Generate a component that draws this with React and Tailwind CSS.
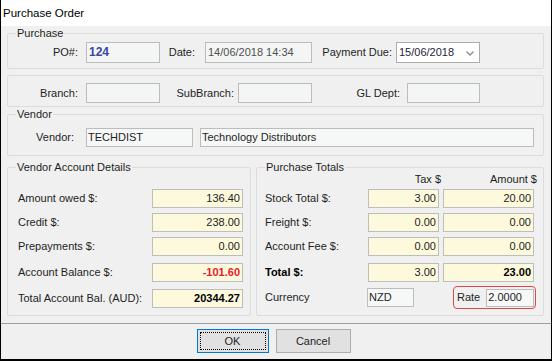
import React from "react";

const Group = ({ title, className = "", children }) => (
  <fieldset className={`border border-[#dcdcdc] rounded-[2px] ${className}`}>
    {title && <legend className="ml-[8px] px-[1px] leading-[13px]">{title}</legend>}
    {children}
  </fieldset>
);

const Field = ({ className = "", children }) => (
  <div className={`flex items-center border leading-[13px] whitespace-nowrap overflow-hidden ${className}`}>
    {children}
  </div>
);

const Money = ({ className = "", children }) => (
  <Field className={`justify-end pr-[2px] h-[19px] bg-[#fdf9dc] border-[#bdbdbd] ${className}`}>
    {children}
  </Field>
);

const accountRows = [
  { label: "Amount owed $:", value: "136.40" },
  { label: "Credit $:", value: "238.00" },
  { label: "Prepayments $:", value: "0.00" },
  { label: "Account Balance $:", value: "-101.60", tone: "font-bold text-[#e8202a]" },
  { label: "Total Account Bal. (AUD):", value: "20344.27", tone: "font-bold text-black" },
];

const totalRows = [
  { label: "Stock Total $:", tax: "3.00", amount: "20.00" },
  { label: "Freight $:", tax: "0.00", amount: "0.00" },
  { label: "Account Fee $:", tax: "0.00", amount: "0.00" },
  { label: "Total $:", tax: "3.00", amount: "23.00", bold: true },
];

const App = () => {
  return (
    <div className="w-[552px] h-[361px] flex flex-col bg-[#f0f0f0] border-x border-b-2 border-black text-[11px] leading-[13px] text-[#1e1e1e] font-['Liberation_Sans',Arial,sans-serif] overflow-hidden">
      <div className="h-[26px] shrink-0 bg-white flex items-center pl-[2px] text-[11.5px] text-black">
        Purchase Order
      </div>

      <div className="flex flex-col pl-[6px] pr-[7px]">
        <Group title="Purchase" className="mt-[1px]">
          <div className="flex items-center pt-[2px] pb-[5px]">
            <span className="w-[70px] text-right">PO#:</span>
            <Field className="ml-[8px] w-[74px] h-[21px] pl-[2px] bg-[#f4f5f5] border-[#bcbcbc] font-bold text-[12px] text-[#3a46a4]">
              124
            </Field>
            <span className="w-[35px] text-right">Date:</span>
            <Field className="ml-[10px] w-[107px] h-[21px] pl-[2px] bg-[#f4f5f5] border-[#bcbcbc] text-[#505050]">
              14/06/2018 14:34
            </Field>
            <span className="w-[80px] text-right">Payment Due:</span>
            <Field className="ml-[4px] w-[84px] h-[21px] pl-[2px] pr-[5px] bg-white border-[#acacac] text-[#1e1e3c] justify-between">
              <span>15/06/2018</span>
              <svg width="8" height="5" viewBox="0 0 8 5" className="mt-[1px]">
                <polyline points="0.5,0.5 4,4 7.5,0.5" fill="none" stroke="#8a8a8a" strokeWidth="1.3" />
              </svg>
            </Field>
          </div>
        </Group>

        <Group className="mt-[6px]">
          <div className="flex items-center pt-[7px] pb-[3px]">
            <span className="w-[70px] text-right">Branch:</span>
            <Field className="ml-[8px] w-[74px] h-[20px] bg-[#f4f5f5] border-[#bcbcbc]" />
            <span className="w-[74px] text-right">SubBranch:</span>
            <Field className="ml-[4px] w-[74px] h-[20px] bg-[#f4f5f5] border-[#bcbcbc]" />
            <span className="w-[88px] text-right">GL Dept:</span>
            <Field className="ml-[7px] w-[73px] h-[20px] bg-[#f4f5f5] border-[#bcbcbc]" />
          </div>
        </Group>

        <Group title="Vendor" className="mt-[1px]">
          <div className="flex items-center pt-[7px] pb-[8px]">
            <span className="w-[66px] text-right">Vendor:</span>
            <Field className="ml-[12px] w-[107px] h-[19px] pl-[1px] bg-[#f6f8f8] border-[#bcbcbc]">
              TECHDIST
            </Field>
            <Field className="ml-[7px] w-[334px] h-[19px] pl-[1px] bg-[#f6f8f8] border-[#bcbcbc]">
              Technology Distributors
            </Field>
          </div>
        </Group>

        <div className="flex gap-[5px] mt-[5px]">
          <Group title="Vendor Account Details" className="w-[244px]">
            <div className="flex flex-col pl-[10px] pr-[7px] pt-[15px] pb-[7px]">
              {accountRows.map((row, i) => (
                <div
                  key={row.label}
                  className={`flex items-center justify-between ${i === 0 ? "" : i < 3 ? "mt-[5px]" : "mt-[7px]"}`}
                >
                  <span>{row.label}</span>
                  <Money className={`w-[91px] ${row.tone || ""}`}>{row.value}</Money>
                </div>
              ))}
            </div>
          </Group>

          <Group title="Purchase Totals" className="flex-1">
            <div className="flex flex-col pl-[8px] pr-[9px] pb-[6px]">
              <div className="flex items-center justify-end h-[13px] -mt-[1px]">
                <span className="w-[71px] text-right pr-[1px]">Tax $</span>
                <span className="ml-[4px] w-[91px] text-right -mr-[3px]">Amount $</span>
              </div>
              {totalRows.map((row, i) => (
                <div
                  key={row.label}
                  className={`flex items-center ${i === 0 ? "mt-[3px]" : i < 3 ? "mt-[5px]" : "mt-[7px]"}`}
                >
                  <span className={`flex-1 ${row.bold ? "font-bold text-black" : ""}`}>{row.label}</span>
                  <Money className="w-[71px]">{row.tax}</Money>
                  <Money className={`ml-[4px] w-[91px] ${row.bold ? "font-bold text-black" : ""}`}>
                    {row.amount}
                  </Money>
                </div>
              ))}
              <div className="flex items-center mt-[4px]">
                <span className="w-[102px]">Currency</span>
                <Field className="w-[47px] h-[19px] pl-[1px] bg-[#f6f8f8] border-[#bcbcbc]">NZD</Field>
                <div className="ml-auto -mr-[2px] w-[83px] h-[23px] flex items-center pl-[3px] border border-[#e04848] rounded-[4px]">
                  <span>Rate</span>
                  <Field className="ml-[6px] w-[48px] h-[18px] pl-[1px] bg-[#f6f8f8] border-[#bcbcbc]">2.0000</Field>
                </div>
              </div>
            </div>
          </Group>
        </div>
      </div>

      <div className="mt-[7px] border-t border-[#a0a0a0]" />

      <div className="flex justify-center gap-[7px] pr-[5px] mt-[5px]">
        <button
          type="button"
          className="w-[72px] h-[24px] p-[2px] bg-[#e1e1e1] border border-[#0078d7] text-[11px] text-[#1e1e1e]"
        >
          <div className="h-full flex items-center justify-center border border-dotted border-black">OK</div>
        </button>
        <button
          type="button"
          className="w-[75px] h-[24px] bg-[#e1e1e1] border border-[#adadad] text-[11px] text-[#1e1e1e]"
        >
          Cancel
        </button>
      </div>
    </div>
  );
};

export default App;
